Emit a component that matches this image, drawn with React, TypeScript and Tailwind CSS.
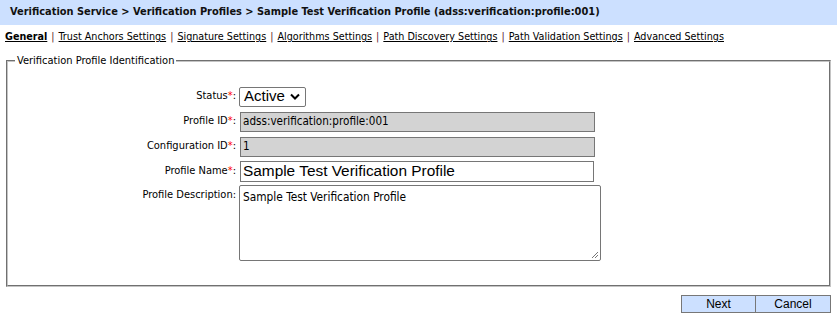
const tabs = [
  "Trust Anchors Settings",
  "Signature Settings",
  "Algorithms Settings",
  "Path Discovery Settings",
  "Path Validation Settings",
  "Advanced Settings",
];

const Req = () => <span className="text-[#ff0000]">*</span>;

const App = () => {
  return (
    <div className="w-[837px] h-[318px] bg-white text-black font-['DejaVu_Sans_Condensed','DejaVu_Sans',sans-serif] overflow-hidden">
      <div className="h-[25px] bg-[#cce0ff] pl-[10px] flex items-center text-[10.95px] font-bold text-[#111]">
        Verification Service &gt; Verification Profiles &gt; Sample Test Verification Profile (adss:verification:profile:001)
      </div>
      <div className="pl-[5px] pt-[3px] h-[22px] text-[10.7px] flex items-center">
        <a className="font-bold underline">General</a>
        {tabs.map((t) => (
          <span key={t} className="flex items-center">
            <span className="px-[4px] text-[#5a2030]">|</span>
            <a className="underline">{t}</a>
          </span>
        ))}
      </div>
      <fieldset className="mx-[6px] mt-[6px] h-[234px] border-2 border-[#c4c4c4] [border-style:groove] px-[8px]">
        <legend className="text-[11px] px-[2px] -ml-[1px]">Verification Profile Identification</legend>
        <div className="grid grid-cols-[220px_1fr] gap-x-[3px] mt-[17px] text-[11px]">
          <div className="h-[20px] flex items-center justify-end">
            Status<Req />:
          </div>
          <div className="h-[20px]">
            <div className="w-[67px] h-[20px] border border-[#767676] rounded-[2px] flex items-center justify-between pl-[4px] pr-[5px] font-['Liberation_Sans',sans-serif] text-[15px]">
              Active
              <svg width="10" height="7" viewBox="0 0 10 7">
                <path d="M1 1.5 L5 5.5 L9 1.5" fill="none" stroke="#000" strokeWidth="2" />
              </svg>
            </div>
          </div>

          <div className="h-[20px] mt-[5px] flex items-center justify-end">
            Profile ID<Req />:
          </div>
          <div className="mt-[5px] pl-[1px]">
            <div className="w-[355px] h-[20px] border border-[#767676] bg-[#d3d3d3] flex items-center px-[2px] text-[11.6px]">
              adss:verification:profile:001
            </div>
          </div>

          <div className="h-[20px] mt-[5px] flex items-center justify-end">
            Configuration ID<Req />:
          </div>
          <div className="mt-[5px] pl-[1px]">
            <div className="w-[355px] h-[20px] border border-[#767676] bg-[#d3d3d3] flex items-center px-[2px] text-[11.6px]">
              1
            </div>
          </div>

          <div className="h-[21px] mt-[4px] flex items-center justify-end">
            Profile Name<Req />:
          </div>
          <div className="mt-[4px] pl-[1px]">
            <div className="w-[354px] h-[21px] border border-[#767676] flex items-center px-[2px] font-['Liberation_Sans',sans-serif] text-[15.4px]">
              Sample Test Verification Profile
            </div>
          </div>

          <div className="mt-[3px] pt-[2px] flex justify-end items-start">
            Profile Description:
          </div>
          <div className="mt-[3px]">
            <div className="relative w-[362px] h-[76px] border border-[#767676] rounded-[2px] px-[3px] pt-[3px] text-[11.8px]">
              Sample Test Verification Profile
              <svg className="absolute right-[1px] bottom-[1px]" width="8" height="8" viewBox="0 0 8 8">
                <path d="M7 1 L1 7 M7 4 L4 7" stroke="#777" strokeWidth="1" />
              </svg>
            </div>
          </div>
        </div>
      </fieldset>
      <div className="flex justify-end pr-[6px] mt-[8px]">
        <button className="w-[75px] h-[18px] bg-[#cce0ff] border border-[#777] text-[12px] font-['Liberation_Sans',sans-serif] leading-none">
          Next
        </button>
        <button className="w-[75px] h-[18px] bg-[#cce0ff] border border-[#777] border-l-0 text-[12px] font-['Liberation_Sans',sans-serif] leading-none">
          Cancel
        </button>
      </div>
    </div>
  );
};

export default App;
